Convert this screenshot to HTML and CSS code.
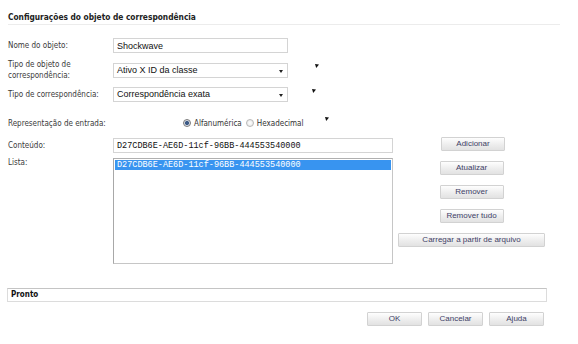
FILE: index.html
```html
<!DOCTYPE html>
<html lang="pt">
<head>
    <meta charset="UTF-8">
    <title>Configurações do objeto de correspondência</title>
    <link rel="stylesheet" href="styles.css">
</head>
<body>
    <div class="dialog">
        <h1 class="title">Configurações do objeto de correspondência</h1>

        <div class="form">
            <div class="row row-name">
                <label>Nome do objeto:</label>
                <input class="field" type="text" value="Shockwave">
            </div>

            <div class="row row-type">
                <label>Tipo de objeto de<br>correspondência:</label>
                <div class="field select">Ativo X ID da classe<span class="caret"></span></div>
                <svg class="mark mark-type" width="4" height="4" viewBox="0 0 4 4"><polygon points="0,0 4,0.5 1.2,4" fill="#111"/></svg>
            </div>

            <div class="row row-match">
                <label>Tipo de correspondência:</label>
                <div class="field select">Correspondência exata<span class="caret"></span></div>
                <svg class="mark mark-match" width="4" height="4" viewBox="0 0 4 4"><polygon points="0,0 4,0.5 1.2,4" fill="#111"/></svg>
            </div>

            <div class="row row-repr">
                <label>Representação de entrada:</label>
                <div class="radios">
                    <span class="radio checked"></span><span class="radio-label">Alfanumérica</span>
                    <span class="radio"></span><span class="radio-label">Hexadecimal</span>
                </div>
                <svg class="mark mark-repr" width="4" height="4" viewBox="0 0 4 4"><polygon points="0,0 4,0.5 1.2,4" fill="#111"/></svg>
            </div>
        </div>

        <div class="content">
            <div class="content-left">
                <div class="row">
                    <label>Conteúdo:</label>
                    <input class="field wide mono" type="text" value="D27CDB6E-AE6D-11cf-96BB-444553540000">
                </div>
                <div class="row row-list">
                    <label>Lista:</label>
                    <div class="listbox">
                        <div class="list-item selected mono">D27CDB6E-AE6D-11cf-96BB-444553540000</div>
                    </div>
                </div>
            </div>
            <div class="actions">
                <button class="btn btn-add">Adicionar</button>
                <button class="btn">Atualizar</button>
                <button class="btn">Remover</button>
                <button class="btn">Remover tudo</button>
                <button class="btn btn-long">Carregar a partir de arquivo</button>
            </div>
        </div>

        <div class="status">Pronto</div>

        <div class="footer">
            <button class="btn btn-footer">OK</button>
            <button class="btn btn-footer">Cancelar</button>
            <button class="btn btn-footer">Ajuda</button>
        </div>
    </div>
</body>
</html>
```

FILE: styles.css
```css
body {
    margin: 0;
    background: #fff;
    font-family: "DejaVu Sans Condensed", "DejaVu Sans", sans-serif;
    font-size: 8px;
    color: #3a3a3a;
}

.dialog {
    padding: 0 8px;
}

.title {
    width: 552px;
    margin: 0;
    padding: 12px 0 2px;
    font-size: 8.3px;
    line-height: 10px;
    font-weight: bold;
    color: #222;
    border-bottom: 1px solid #ececec;
}

.form {
    padding-top: 13px;
}

.row {
    display: flex;
    align-items: center;
}

.row label {
    width: 105px;
    flex: none;
    line-height: 11px;
}

.row-type,
.row-match {
    margin-top: 6px;
}

.row-repr {
    margin-top: 15px;
    height: 12px;
}

.field {
    box-sizing: border-box;
    width: 175px;
    height: 15px;
    margin: 0;
    padding: 0 3px;
    border: 1px solid #d4d4d4;
    background: #fff;
    font-family: "Liberation Sans", Arial, sans-serif;
    font-size: 9px;
    line-height: 13px;
    color: #111;
    outline: none;
}

.select {
    position: relative;
}

.caret {
    position: absolute;
    right: 4px;
    top: 6px;
    width: 0;
    height: 0;
    border-left: 2.5px solid transparent;
    border-right: 2.5px solid transparent;
    border-top: 3px solid #222;
}

.mark {
    flex: none;
    align-self: flex-start;
}

.mark-type {
    margin: 5px 0 0 27px;
}

.mark-match {
    margin: 2px 0 0 24px;
}

.mark-repr {
    margin: 0 0 0 17px;
}

.radios {
    display: flex;
    align-items: center;
    margin-left: 70px;
    font-family: "DejaVu Sans Condensed", "DejaVu Sans", sans-serif;
    font-size: 8px;
    color: #333;
}

.radio {
    box-sizing: border-box;
    width: 8px;
    height: 8px;
    margin-right: 3px;
    border: 1px solid #b8b8b8;
    border-radius: 50%;
    background: radial-gradient(#fff, #e4e4e4);
}

.radio.checked {
    border-color: #7a7a7a;
    background: radial-gradient(#3c5a86 0 1.8px, #d8dde6 2.3px);
}

.radio-label {
    margin-right: 4px;
}

.content {
    display: flex;
    margin-top: 9px;
}

.content-left {
    width: 385px;
}

.wide {
    width: 280px;
}

.mono {
    font-family: "Liberation Mono", "Courier New", monospace;
    font-size: 8.5px;
}

.row-list {
    margin-top: 5px;
    align-items: flex-start;
}

.row-list label {
    line-height: 10px;
}

.listbox {
    box-sizing: border-box;
    width: 280px;
    height: 106px;
    padding: 1px;
    border: 1px solid #c6c6c6;
    border-left-color: #a8a8a8;
    border-top-color: #b0b0b0;
}

.list-item {
    height: 10px;
    line-height: 10px;
    padding-left: 2px;
}

.selected {
    background: #3894f0;
    color: #fff;
}

.actions {
    width: 147px;
    margin-left: 5px;
    margin-top: -1px;
    display: flex;
    flex-direction: column;
    align-items: center;
    gap: 10px;
}

.btn {
    box-sizing: border-box;
    width: 64px;
    height: 14px;
    margin: 0;
    padding: 0;
    border: 1px solid #d2d2d2;
    border-radius: 1px;
    background: linear-gradient(#fefefe, #ececec 60%, #e2e2e2);
    font-family: "Liberation Sans", Arial, sans-serif;
    font-size: 8px;
    line-height: 12px;
    color: #3e3e66;
    cursor: pointer;
}

.btn-add {
    margin-left: 3px;
}

.btn-long {
    width: 147px;
}

.status {
    box-sizing: border-box;
    width: 540px;
    height: 14px;
    margin: 24px 0 0 -1px;
    padding-left: 3px;
    border: 1px solid #dcdcdc;
    border-top-color: #c4c4c4;
    font-family: "DejaVu Sans Condensed", "DejaVu Sans", sans-serif;
    font-weight: bold;
    font-size: 8px;
    line-height: 12px;
    color: #111;
}

.footer {
    display: flex;
    justify-content: flex-end;
    gap: 6px;
    width: 536px;
    margin-top: 10px;
}

.btn-footer {
    width: 55px;
}
```
